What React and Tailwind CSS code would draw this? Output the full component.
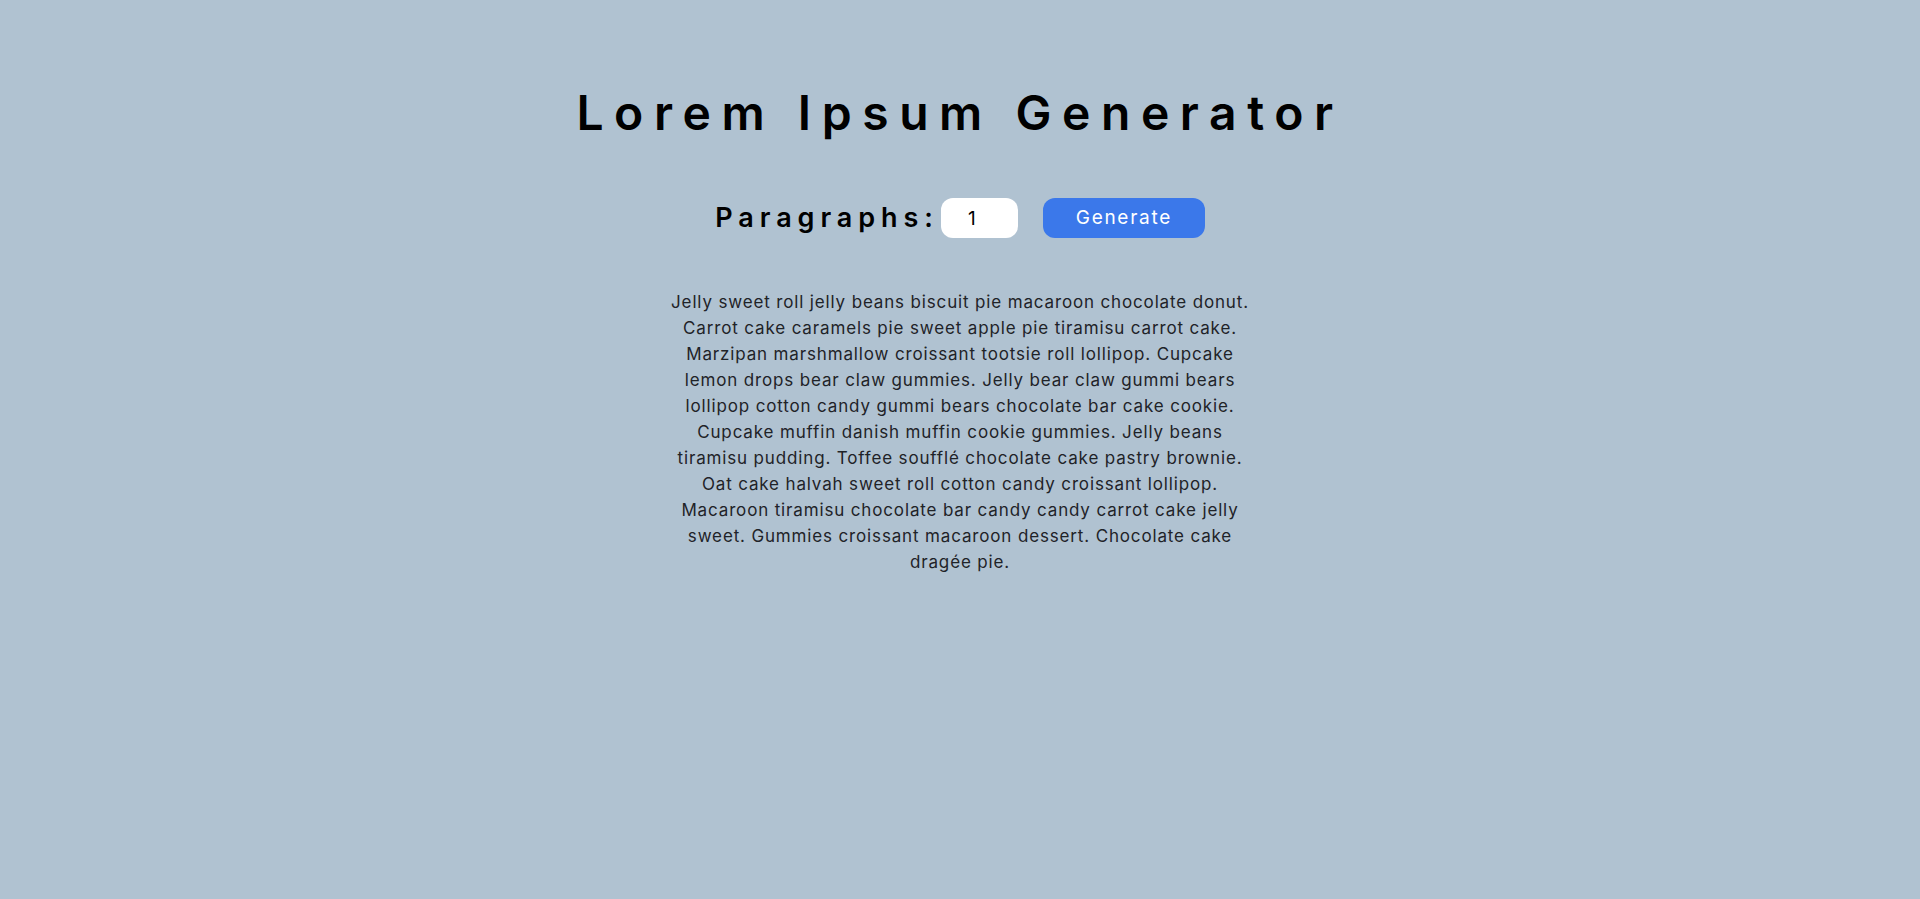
import React, { useState } from 'react';

const text =
  'Jelly sweet roll jelly beans biscuit pie macaroon chocolate donut. Carrot cake caramels pie sweet apple pie tiramisu carrot cake. Marzipan marshmallow croissant tootsie roll lollipop. Cupcake lemon drops bear claw gummies. Jelly bear claw gummi bears lollipop cotton candy gummi bears chocolate bar cake cookie. Cupcake muffin danish muffin cookie gummies. Jelly beans tiramisu pudding. Toffee soufflé chocolate cake pastry brownie. Oat cake halvah sweet roll cotton candy croissant lollipop. Macaroon tiramisu chocolate bar candy candy carrot cake jelly sweet. Gummies croissant macaroon dessert. Chocolate cake dragée pie.';

function App() {
  const [count, setCount] = useState(1);

  return (
    <div className="min-h-screen bg-[#b0c2d1] text-black font-['Inter',sans-serif]">
      <div className="max-w-[1170px] mx-auto pt-[83px] text-center">
        {/* Title */}
        <h1 className="text-[48px] leading-[60px] font-semibold tracking-[0.22em]">Lorem Ipsum Generator</h1>

        {/* Controls */}
        <form
          className="mt-[55px] flex items-center justify-center"
          onSubmit={(e) => e.preventDefault()}
        >
          <label className="text-[27px] font-semibold tracking-[0.22em]">Paragraphs:</label>
          <input
            type="number"
            value={count}
            onChange={(e) => setCount(e.target.value)}
            className="ml-[2px] w-[77px] h-[40px] rounded-[12px] bg-white text-center text-[19px] outline-none"
          />
          <button className="ml-[25px] w-[162px] h-[40px] rounded-[12px] bg-[#3b78ea] text-white text-[19px] tracking-[0.09em]">
            Generate
          </button>
        </form>

        {/* Output */}
        <div className="mt-[50px] max-w-[600px] mx-auto">
          <p className="text-[17px] leading-[26px] text-[#1f2328] tracking-[0.05em]">{text}</p>
        </div>
      </div>
    </div>
  );
}

export default App;
